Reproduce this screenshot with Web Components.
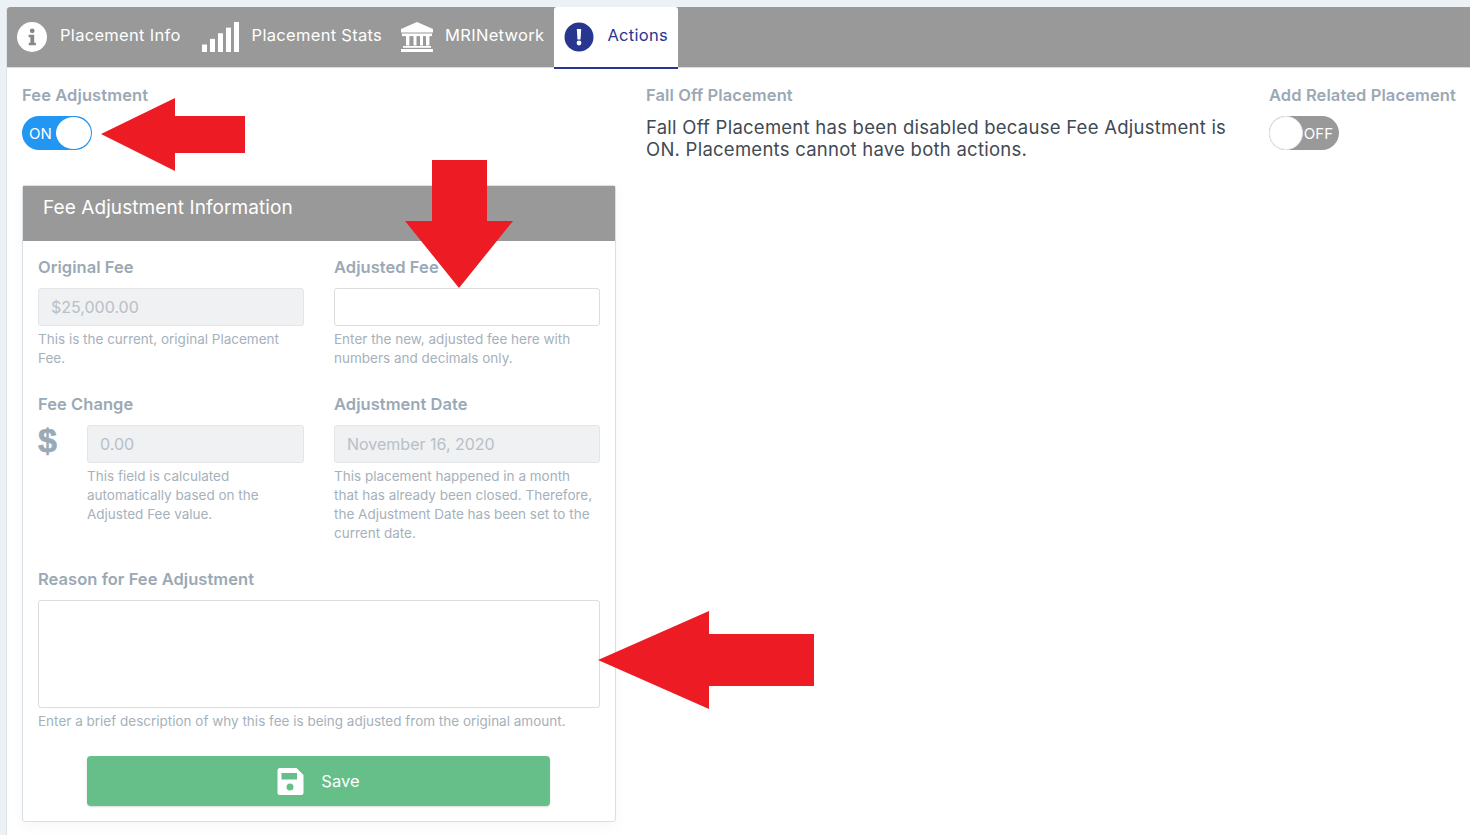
<!DOCTYPE html>
<html>
<head>
<meta charset="utf-8">
<title>Actions</title>
<style>
  html, body { margin: 0; height: 100%; }
  body {
    background: #ebf1f5;
    font-family: Inter, "Liberation Sans", sans-serif;
    overflow: hidden;
  }
</style>
</head>
<body>
<placement-page></placement-page>

<script>
const ICONS = {
  info: `<svg width="30" height="30" viewBox="0 0 30 30"><circle cx="15" cy="15" r="15" fill="#fff"/><circle cx="15.2" cy="8.8" r="2.4" fill="#888"/><path d="M11.6 12.7h5.6v8h1.7v2.6h-7.2v-2.6h1.700v-5.400h-1.800z" fill="#888"/></svg>`,
  bars: `<svg width="37" height="30" viewBox="0 0 37 32" preserveAspectRatio="none" fill="#fff"><rect x="0" y="24" width="5" height="8"/><rect x="8" y="18" width="5" height="14"/><rect x="16" y="12" width="5" height="20"/><rect x="24" y="6" width="5" height="26"/><rect x="32" y="0" width="5" height="32"/></svg>`,
  bank: `<svg width="32" height="30" viewBox="0 0 32 30" fill="#fff"><path d="M16 0 32 7v3.500H0V7z"/><rect x="1" y="11.500" width="30" height="2.600"/><rect x="5" y="14" width="3.400" height="9.500"/><rect x="12.500" y="14" width="3" height="9.500"/><rect x="19" y="14" width="3" height="9.500"/><rect x="25" y="14" width="3.400" height="9.500"/><rect x="2" y="24" width="28" height="1.800"/><rect x="0" y="27" width="32" height="3"/></svg>`,
  alert: `<svg width="30" height="30" viewBox="0 0 30 30"><circle cx="15" cy="15" r="14.500" fill="#27378f"/><path d="M12.800 7h4.400l-.7 10.400h-3z" fill="#fff"/><circle cx="15" cy="21" r="2.400" fill="#fff"/></svg>`,
  save: `<svg width="27" height="27" viewBox="0 0 26 27"><path d="M2.500 0H19l7 7v17.500a2.500 2.500 0 0 1-2.500 2.500h-21A2.500 2.500 0 0 1 0 24.500v-22A2.500 2.500 0 0 1 2.500 0z" fill="#fff"/><rect x="4" y="5" width="15.500" height="6.500" fill="#66bf88"/><circle cx="12.500" cy="19" r="3.500" fill="#66bf88"/></svg>`
};

class TabBar extends HTMLElement {
  constructor() {
    super();
    this.attachShadow({ mode: 'open' }).innerHTML = `
      <style>
        :host { display: flex; height: 61px; background: #999; padding-left: 1px; border-bottom: 1px solid #d8dde1; box-sizing: border-box; border-radius: 3px 0 0 0; }
      </style>
      <slot></slot>`;
  }
}
customElements.define('tab-bar', TabBar);

class TabItem extends HTMLElement {
  constructor() {
    super();
    this.attachShadow({ mode: 'open' }).innerHTML = `
      <style>
        :host { display: flex; align-items: center; height: 60px; box-sizing: border-box; color: #fff; font-size: 16.500px; letter-spacing: .3px; }
        :host([active]) { background: #fff; color: #27378f; border-bottom: 2px solid #27378f; border-radius: 3px 3px 0 0; height: 62px; }
        .icon { display: flex; align-items: center; justify-content: center; }
        .label { padding-bottom: 4px; white-space: nowrap; }
      </style>
      <span class="icon"></span><span class="label"><slot></slot></span>`;
  }
  connectedCallback() {
    const icon = this.shadowRoot.querySelector('.icon');
    icon.innerHTML = ICONS[this.getAttribute('icon')];
    this.style.padding = this.getAttribute('pad');
    icon.style.marginRight = this.getAttribute('gap') + 'px';
  }
}
customElements.define('tab-item', TabItem);

class ToggleSwitch extends HTMLElement {
  constructor() {
    super();
    this.attachShadow({ mode: 'open' }).innerHTML = `
      <style>
        :host { display: flex; align-items: center; position: relative; width: 70px; height: 34px; border-radius: 17px; background: #999; color: #fff; font-size: 15px; box-sizing: border-box; justify-content: flex-end; padding-right: 6px; }
        :host([on]) { background: #2196f3; justify-content: flex-start; padding: 0 0 0 7px; }
        .knob { position: absolute; top: 0; left: 0; width: 34px; height: 34px; border-radius: 50%; background: #fff; box-sizing: border-box; border: 1px solid #e6e6e6; }
        :host([on]) .knob { left: 34px; top: 1px; width: 35px; height: 32px; border: 0; }
      </style>
      <slot></slot><span class="knob"></span>`;
  }
}
customElements.define('toggle-switch', ToggleSwitch);

class FormField extends HTMLElement {
  constructor() {
    super();
    this.attachShadow({ mode: 'open' }).innerHTML = `
      <style>
        :host { display: block; min-width: 0; }
        label { display: block; font-size: 16.500px; line-height: 24px; font-weight: 600; color: #9aa9b6; letter-spacing: .05px; margin-bottom: 9px; white-space: nowrap; }
        .row { display: flex; }
        .sign { width: 49px; flex: none; font-size: 34px; font-weight: 700; line-height: 30px; color: #9aa9b6; font-family: "Liberation Sans", sans-serif; -webkit-text-stroke: .6px #9aa9b6; }
        .main { flex: 1; min-width: 0; }
        .box { height: 38px; box-sizing: border-box; border: 1px solid #d8dde2; border-radius: 3px; background: #fff; font-size: 16px; line-height: 36px; padding: 0 12px; color: #b7c0c8; }
        :host([disabled]) .box { background: #eff1f3; border-color: #e3e6e9; }
        :host([area]) .box { height: 108px; }
        .help { font-size: 13.500px; line-height: 19px; color: #a6b1bb; padding-top: 4px; }
      </style>
      <label></label>
      <div class="row">
        <div class="sign" hidden>$</div>
        <div class="main">
          <div class="box"></div>
          <div class="help"><slot></slot></div>
        </div>
      </div>`;
  }
  connectedCallback() {
    const root = this.shadowRoot;
    root.querySelector('label').textContent = this.getAttribute('label');
    root.querySelector('.box').textContent = this.getAttribute('value') || '';
    if (this.hasAttribute('dollar')) root.querySelector('.sign').hidden = false;
  }
}
customElements.define('form-field', FormField);

class FeePanel extends HTMLElement {
  constructor() {
    super();
    this.attachShadow({ mode: 'open' }).innerHTML = `
      <style>
        :host { display: block; background: #fff; border: 1px solid #d8dfe5; border-radius: 3px; box-shadow: 0 4px 14px rgba(0,0,0,.04); }
        header { height: 55px; background: #999; color: #fff; font-size: 19px; line-height: 44px; padding-left: 20px; letter-spacing: .08px; }
        .body { padding: 14px 15px 15px; }
        .grid { display: grid; grid-template-columns: 266px 266px; column-gap: 30px; }
        .r1 { height: 137px; }
        .r2 { height: 175px; }
        .save { display: flex; align-items: center; justify-content: center; gap: 17px; height: 50px; margin: 25px 50px 0 49px; background: #66bf88; border-radius: 4px; color: #fff; font-size: 16.500px; letter-spacing: .1px; box-shadow: 0 1px 2px rgba(0,0,0,.15); }
        .save svg { display: block; }
      </style>
      <header>Fee Adjustment Information</header>
      <div class="body">
        <div class="grid">
          <form-field class="r1" label="Original Fee" value="$25,000.00" disabled>This is the current, original Placement Fee.</form-field>
          <form-field class="r1" label="Adjusted Fee">Enter the new, adjusted fee here with numbers and decimals only.</form-field>
          <form-field class="r2" label="Fee Change" value="0.00" dollar disabled>This field is calculated automatically based on the Adjusted Fee value.</form-field>
          <form-field class="r2" label="Adjustment Date" value="November 16, 2020" disabled>This placement happened in a month<br>that has already been closed. Therefore,<br>the Adjustment Date has been set to the<br>current date.</form-field>
        </div>
        <form-field area label="Reason for Fee Adjustment">Enter a brief description of why this fee is being adjusted from the original amount.</form-field>
        <div class="save">${ICONS.save}<span>Save</span></div>
      </div>`;
  }
}
customElements.define('fee-panel', FeePanel);

// red annotation arrows lying over the form
class ArrowMark extends HTMLElement {
  constructor() {
    super();
    this.attachShadow({ mode: 'open' }).innerHTML = `
      <style>:host { position: absolute; display: block; line-height: 0; }</style>
      <svg><polygon fill="#ed1c24"/></svg>`;
  }
  connectedCallback() {
    const [x, y, w, h] = this.getAttribute('box').split(' ').map(Number);
    this.style.left = x + 'px';
    this.style.top = y + 'px';
    const svg = this.shadowRoot.querySelector('svg');
    svg.setAttribute('width', w);
    svg.setAttribute('height', h);
    svg.querySelector('polygon').setAttribute('points', this.getAttribute('points'));
  }
}
customElements.define('arrow-mark', ArrowMark);

class PlacementPage extends HTMLElement {
  constructor() {
    super();
    this.attachShadow({ mode: 'open' }).innerHTML = `
      <style>
        :host { display: block; position: relative; height: 835px; box-sizing: border-box; padding: 7px 0 0 6px; overflow: hidden; }
        .card { background: #fff; height: 828px; border-left: 1px solid #dde3e8; box-sizing: border-box; }
        .cols { display: grid; grid-template-columns: 594px 593px 1fr; column-gap: 30px; padding: 15px 0 0 15px; }
        h4 { margin: 0 0 9px; font-size: 16.500px; line-height: 24px; font-weight: 600; color: #9aa9b6; letter-spacing: .1px; white-space: nowrap; }
        p { margin: 0; font-size: 18.500px; line-height: 22px; color: #3f4a54; letter-spacing: .25px; white-space: nowrap; }
        fee-panel { margin-top: 35px; }
      </style>
      <div class="card">
        <tab-bar>
          <tab-item icon="info" pad="0 21px 0 9px" gap="13">Placement Info</tab-item>
          <tab-item icon="bars" pad="0 10px 0 0" gap="13">Placement Stats</tab-item>
          <tab-item icon="bank" pad="0 10px 0 9px" gap="12">MRINetwork</tab-item>
          <tab-item icon="alert" pad="0 10px" gap="13" active>Actions</tab-item>
        </tab-bar>
        <div class="cols">
          <section>
            <h4>Fee Adjustment</h4>
            <toggle-switch on>ON</toggle-switch>
            <fee-panel></fee-panel>
          </section>
          <section>
            <h4>Fall Off Placement</h4>
            <p>Fall Off Placement has been disabled because Fee Adjustment is<br>ON. Placements cannot have both actions.</p>
          </section>
          <section>
            <h4>Add Related Placement</h4>
            <toggle-switch>OFF</toggle-switch>
          </section>
        </div>
      </div>
      <arrow-mark box="101 98 145 74" points="0,36 74,0 74,18 144,18 144,55 74,55 74,73"></arrow-mark>
      <arrow-mark box="405 160 109 129" points="27,0 82,0 82,61 108,61 54,128 0,61 27,61"></arrow-mark>
      <arrow-mark box="598 611 217 99" points="0,49 111,0 111,23 216,23 216,75 111,75 111,98"></arrow-mark>`;
  }
}
customElements.define('placement-page', PlacementPage);
</script>
</body>
</html>
